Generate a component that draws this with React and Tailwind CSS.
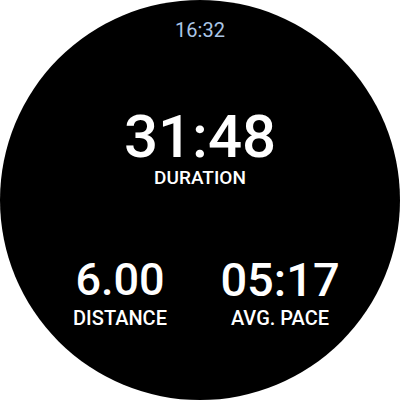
export default function App() {
  return (
    <div className="w-[400px] h-[400px] bg-white">
      <div
        className="w-[400px] h-[400px] rounded-full bg-black flex flex-col items-center text-white"
        style={{ fontFamily: "Roboto, 'Noto Sans', sans-serif" }}
      >
        {/* clock */}
        <div className="mt-[18px] text-[20px] leading-[24px] text-[#aac6e6]">16:32</div>

        {/* duration */}
        <div className="mt-[65px] flex flex-col items-center">
          <div className="text-[60px] leading-[60px] font-medium">31:48</div>
          <div className="mt-[1px] text-[19px] leading-[20px] font-medium">DURATION</div>
        </div>

        {/* distance + pace */}
        <div className="mt-[72px] flex w-full justify-center">
          <div className="w-[160px] flex flex-col items-center">
            <div className="text-[45px] leading-[40px] font-medium">6.00</div>
            <div className="mt-[8px] text-[20px] leading-[20px] font-medium">DISTANCE</div>
          </div>
          <div className="w-[160px] flex flex-col items-center">
            <div className="text-[47px] leading-[40px] font-medium">05:17</div>
            <div className="mt-[8px] text-[20px] leading-[20px] font-medium">AVG. PACE</div>
          </div>
        </div>
      </div>
    </div>
  );
}
